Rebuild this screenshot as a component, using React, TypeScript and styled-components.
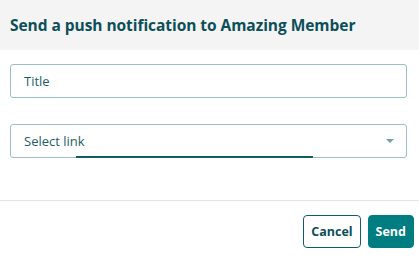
import React from 'react';
import styled, { createGlobalStyle } from 'styled-components';

const GlobalStyle = createGlobalStyle`
  html, body {
    margin: 0;
    padding: 0;
    background: #ffffff;
    font-family: 'Open Sans', 'Liberation Sans', sans-serif;
  }
`;

const Modal = styled.div`
  width: 419px;
  height: 260px;
  display: flex;
  flex-direction: column;
  background: #ffffff;
`;

const Header = styled.div`
  height: 50px;
  background: #f4f4f4;
  display: flex;
  align-items: center;
  padding: 0 10px;
  box-sizing: border-box;
`;

const Heading = styled.h2`
  margin: 0;
  font-size: 15.5px;
  font-weight: 700;
  color: #0c4f59;
  letter-spacing: -0.05px;
`;

const Body = styled.div`
  height: 151px;
  padding: 14px 12px 0 10px;
  box-sizing: border-box;
  display: flex;
  flex-direction: column;
  gap: 26px;
  border-bottom: 1px solid #e6e6e6;
`;

const Field = styled.div`
  position: relative;
  height: 34px;
  border: 1px solid #9dbfc4;
  border-radius: 3px;
  box-sizing: border-box;
  display: flex;
  align-items: center;
  padding: 0 13px;
  font-size: 13px;
  color: #1f5e66;
`;

const Underline = styled.div`
  position: absolute;
  left: 65px;
  width: 237px;
  bottom: -1px;
  height: 2px;
  background: #0f5e66;
`;

const Caret = styled.div`
  margin-left: auto;
  margin-right: -1px;
  width: 0;
  height: 0;
  border-left: 4px solid transparent;
  border-right: 4px solid transparent;
  border-top: 4px solid #7a9ea4;
`;

const Footer = styled.div`
  flex: 1;
  display: flex;
  justify-content: flex-end;
  align-items: flex-start;
  gap: 7px;
  padding: 14px 5px 0 0;
`;

const Button = styled.button<{ primary?: boolean }>`
  height: 33px;
  padding: 0 7px;
  border-radius: 4px;
  font-family: inherit;
  font-size: 12.5px;
  font-weight: 700;
  cursor: pointer;
  border: 1px solid ${p => (p.primary ? '#007d80' : '#0f5e66')};
  background: ${p => (p.primary ? '#007d80' : '#ffffff')};
  color: ${p => (p.primary ? '#ffffff' : '#0c4f59')};
`;

export default function App() {
  return (
    <>
      <GlobalStyle />
      <Modal>
        <Header>
          <Heading>Send a push notification to Amazing Member</Heading>
        </Header>
        <Body>
          <Field>Title</Field>
          <Field>
            Select link
            <Caret />
            <Underline />
          </Field>
        </Body>
        <Footer>
          <Button>Cancel</Button>
          <Button primary>Send</Button>
        </Footer>
      </Modal>
    </>
  );
}
